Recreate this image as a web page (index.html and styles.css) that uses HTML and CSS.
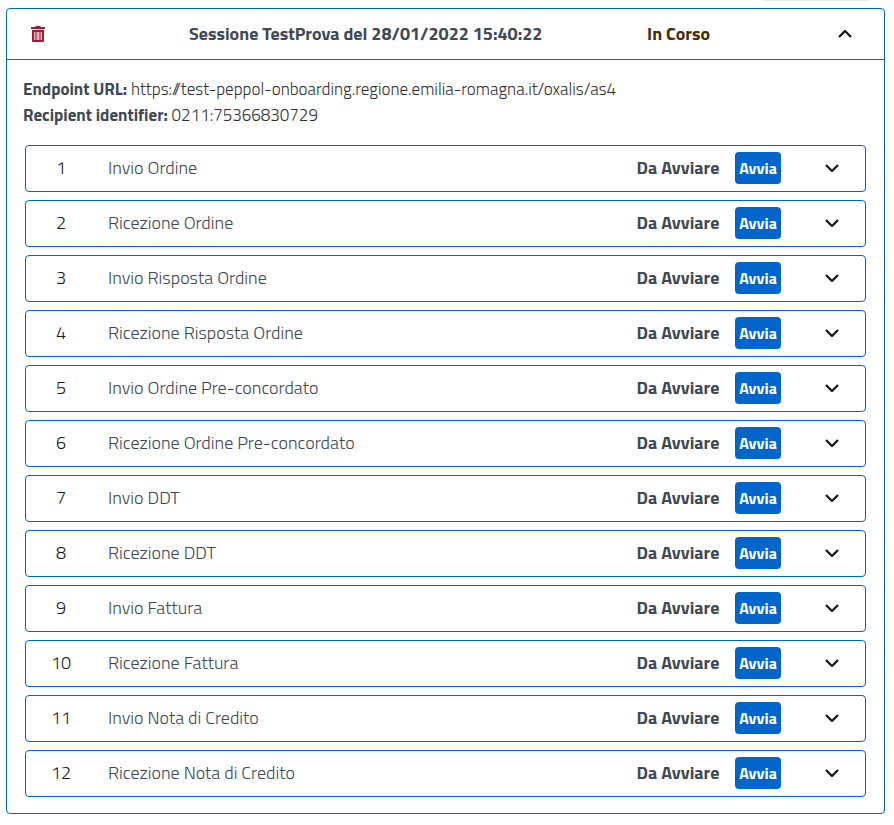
FILE: index.html
```html
<!DOCTYPE html>
<html lang="it">
<head>
<meta charset="utf-8">
<title>Sessione TestProva</title>
<link rel="stylesheet" href="styles.css">
</head>
<body>
<svg class="symbols" aria-hidden="true">
  <symbol id="down" viewBox="0 0 14 8"><path d="M1 1l6 6 6-6"/></symbol>
</svg>
<div class="edge"></div>
<main class="session">
  <header class="session-head">
    <svg class="trash" viewBox="0 0 14 16"><path fill-rule="evenodd" d="M0 1h4.5V0h5v1H14v2H0zM1 4h12v11a1 1 0 0 1-1 1H2a1 1 0 0 1-1-1zM3 6v8h8V6z"/><path class="bars" d="M3 6h8v8H3z"/><path d="M4.5 6h1v8h-1zM8.5 6h1v8h-1z"/></svg>
    <strong class="session-title">Sessione TestProva del 28/01/2022 15:40:22</strong>
    <strong class="session-state">In Corso</strong>
    <svg class="chevron up"><use href="#down"/></svg>
  </header>
  <section class="info">
    <div><strong>Endpoint URL:</strong> <span>https://test-peppol-onboarding.regione.emilia-romagna.it/oxalis/as4</span></div>
    <div><strong>Recipient identifier:</strong> <span>0211:75366830729</span></div>
  </section>
  <ul class="steps">
    <li class="step"><span class="num">1</span><span class="name">Invio Ordine</span><strong class="state">Da Avviare</strong><button class="start">Avvia</button><svg class="chevron"><use href="#down"/></svg></li>
    <li class="step"><span class="num">2</span><span class="name">Ricezione Ordine</span><strong class="state">Da Avviare</strong><button class="start">Avvia</button><svg class="chevron"><use href="#down"/></svg></li>
    <li class="step"><span class="num">3</span><span class="name">Invio Risposta Ordine</span><strong class="state">Da Avviare</strong><button class="start">Avvia</button><svg class="chevron"><use href="#down"/></svg></li>
    <li class="step"><span class="num">4</span><span class="name">Ricezione Risposta Ordine</span><strong class="state">Da Avviare</strong><button class="start">Avvia</button><svg class="chevron"><use href="#down"/></svg></li>
    <li class="step"><span class="num">5</span><span class="name">Invio Ordine Pre-concordato</span><strong class="state">Da Avviare</strong><button class="start">Avvia</button><svg class="chevron"><use href="#down"/></svg></li>
    <li class="step"><span class="num">6</span><span class="name">Ricezione Ordine Pre-concordato</span><strong class="state">Da Avviare</strong><button class="start">Avvia</button><svg class="chevron"><use href="#down"/></svg></li>
    <li class="step"><span class="num">7</span><span class="name">Invio DDT</span><strong class="state">Da Avviare</strong><button class="start">Avvia</button><svg class="chevron"><use href="#down"/></svg></li>
    <li class="step"><span class="num">8</span><span class="name">Ricezione DDT</span><strong class="state">Da Avviare</strong><button class="start">Avvia</button><svg class="chevron"><use href="#down"/></svg></li>
    <li class="step"><span class="num">9</span><span class="name">Invio Fattura</span><strong class="state">Da Avviare</strong><button class="start">Avvia</button><svg class="chevron"><use href="#down"/></svg></li>
    <li class="step"><span class="num">10</span><span class="name">Ricezione Fattura</span><strong class="state">Da Avviare</strong><button class="start">Avvia</button><svg class="chevron"><use href="#down"/></svg></li>
    <li class="step"><span class="num">11</span><span class="name">Invio Nota di Credito</span><strong class="state">Da Avviare</strong><button class="start">Avvia</button><svg class="chevron"><use href="#down"/></svg></li>
    <li class="step"><span class="num">12</span><span class="name">Ricezione Nota di Credito</span><strong class="state">Da Avviare</strong><button class="start">Avvia</button><svg class="chevron"><use href="#down"/></svg></li>
  </ul>
</main>
</body>
</html>
```
FILE: styles.css
```css
* { box-sizing: border-box; }
body {
  margin: 0;
  background: #fff;
  color: #19191a;
  font: 300 18px/26px "Titillium Web", Roboto, sans-serif;
}
.symbols { position: absolute; width: 0; height: 0; }
.edge { width: 106px; height: 1px; margin-left: 762px; background: #e9e9ea; }
.session {
  width: 879px;
  height: 806px;
  margin: 7px 0 0 6px;
  border: 1px solid #06c;
  border-radius: 4px;
}
strong { font-weight: 700; color: #3d4955; white-space: nowrap; }
.session-head {
  display: grid;
  grid-template-columns: 182px 458px 191px 1fr;
  align-items: center;
  height: 51px;
  border-bottom: 1px solid #06c;
}
.trash { width: 14px; height: 16px; margin-left: 24px; fill: #a61c35; }
.trash .bars { fill: #d3b6c5; }
.session-head .session-state { color: #462c05; }
.chevron { width: 14px; height: 8px; fill: none; stroke: #17171b; stroke-width: 2.3; }
.up { transform: rotate(180deg); }
.info { padding: 16px 16px 0; font-size: 17px; white-space: nowrap; }
.info span { color: #303033; }
.steps {
  display: grid;
  gap: 8px;
  margin: 17px 18px 0;
  padding: 0;
  list-style: none;
}
.step {
  display: grid;
  grid-template-columns: 70px 540.5px 98.5px 90px 1fr;
  align-items: center;
  height: 47px;
  padding-bottom: 1px;
  border: 1px solid #06c;
  border-radius: 4px;
}
.num { text-align: center; }
.name { padding-left: 12px; color: #3d4955; white-space: nowrap; }
.start {
  width: 46px;
  height: 32px;
  padding: 0;
  border: 0;
  border-radius: 4px;
  background: #06c;
  color: #fff;
  font: 700 16px/32px "Titillium Web", Roboto, sans-serif;
}
```
